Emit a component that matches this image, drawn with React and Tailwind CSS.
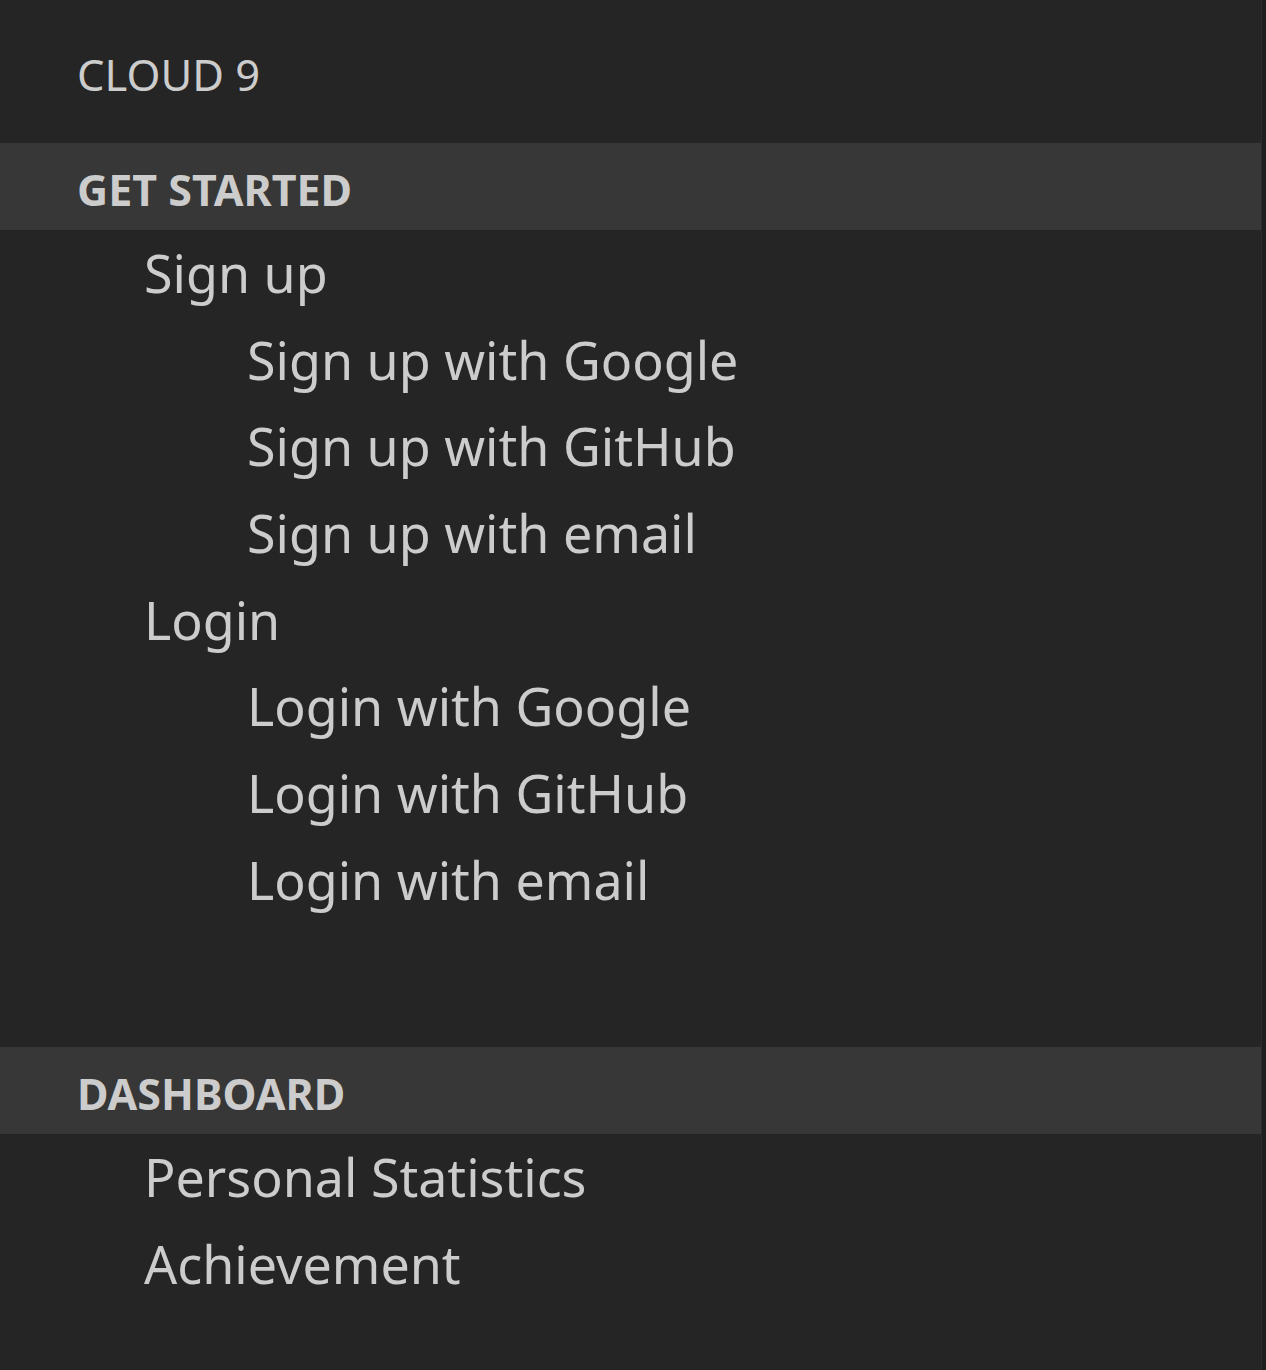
import React from "react";

const sections = [
  {
    title: "GET STARTED",
    items: [
      { label: "Sign up", depth: 0 },
      { label: "Sign up with Google", depth: 1 },
      { label: "Sign up with GitHub", depth: 1 },
      { label: "Sign up with email", depth: 1 },
      { label: "Login", depth: 0 },
      { label: "Login with Google", depth: 1 },
      { label: "Login with GitHub", depth: 1 },
      { label: "Login with email", depth: 1 },
    ],
  },
  {
    title: "DASHBOARD",
    items: [
      { label: "Personal Statistics", depth: 0 },
      { label: "Achievement", depth: 0 },
    ],
  },
];

const Section = ({ title, items, className = "" }) => (
  <div className={className}>
    <div className="h-[86.67px] bg-[#373737] pl-[77px] pt-[6px] flex items-center">
      <span className="text-[43px] font-bold leading-none">{title}</span>
    </div>
    <ul>
      {items.map((item) => (
        <li
          key={item.label}
          className={`h-[86.67px] flex items-center text-[52px] leading-none ${
            item.depth === 0 ? "pl-[144px]" : "pl-[247px]"
          }`}
        >
          {item.label}
        </li>
      ))}
    </ul>
  </div>
);

export default function App() {
  return (
    <div
      className="flex h-[1370px] w-full bg-[#252525] text-[#cccccc]"
      style={{ fontFamily: '"Noto Sans", "Open Sans", sans-serif' }}
    >
      <div className="flex-1">
        <div className="h-[143px] pl-[77px] pt-[6px] flex items-center">
          <span className="text-[43.5px] leading-none">CLOUD 9</span>
        </div>
        {sections.map((s, i) => (
          <Section
            key={s.title}
            title={s.title}
            items={s.items}
            className={i > 0 ? "mt-[124px]" : ""}
          />
        ))}
      </div>
      <div className="w-[5px] bg-[#1f1f1f] border-l border-[#2c2c2c]" />
    </div>
  );
}
